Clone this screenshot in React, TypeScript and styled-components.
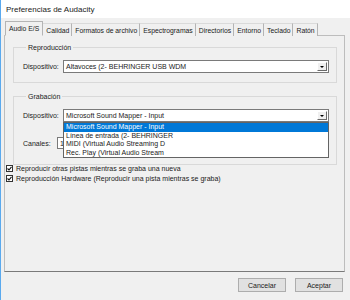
import React from "react";
import styled, { createGlobalStyle } from "styled-components";

const GlobalStyle = createGlobalStyle`
  html, body {
    margin: 0;
    padding: 0;
    background: #f0f0f0;
  }
  body {
    font-family: "Liberation Sans", Arial, sans-serif;
    font-size: 7px;
    color: #1a1a1a;
  }
`;

const Window = styled.div`
  width: 350px;
  height: 300px;
  display: flex;
  flex-direction: column;
  border-left: 1px solid #5aa9ee;
  box-sizing: border-box;
  background: #f0f0f0;
  overflow: hidden;
`;

const TitleBar = styled.div`
  height: 18px;
  background: #ffffff;
  display: flex;
  align-items: center;
  padding-left: 5px;
  font-size: 8px;
  color: #222;
`;

const Body = styled.div`
  flex: 1;
  display: flex;
  flex-direction: column;
  padding: 3px 5px 0 3px;
`;

const TabStrip = styled.div`
  display: flex;
  align-items: flex-end;
  height: 15px;
  padding-left: 1px;
  margin-bottom: -1px;
  position: relative;
  z-index: 1;
`;

const Tab = styled.div<{ $active?: boolean }>`
  height: ${(p) => (p.$active ? 15 : 13)}px;
  display: flex;
  align-items: center;
  padding: 0 ${(p) => (p.$active ? 3 : 2)}px 0 3px;
  font-size: 6.8px;
  border: 1px solid #b4b4b4;
  border-top-color: ${(p) => (p.$active ? "#b4b4b4" : "#dadada")};
  border-bottom: ${(p) => (p.$active ? "1px solid #f0f0f0" : "none")};
  border-left: ${(p) => (p.$active ? "1px solid #b4b4b4" : "none")};
  background: #f0f0f0;
  white-space: nowrap;
  box-sizing: border-box;
`;

const Panel = styled.div`
  height: 237px;
  border: 1px solid #bdbdbd;
  border-bottom-color: #7a7a7a;
  display: flex;
  flex-direction: column;
  gap: 10px;
  padding: 8px 7px 0 8px;
  box-sizing: border-box;
`;

const Group = styled.fieldset<{ $bottom: number }>`
  margin: 0;
  padding: 9px 7px ${(p) => p.$bottom}px 9px;
  border: 1px solid #d9d9d9;
  display: flex;
  flex-direction: column;
  gap: 15px;
  position: relative;
`;

const Legend = styled.legend`
  padding: 0 2px;
  margin-left: 3px;
  font-size: 7px;
`;

const Row = styled.div`
  display: flex;
  align-items: center;
`;

const Label = styled.span<{ $w: number }>`
  width: ${(p) => p.$w}px;
  flex-shrink: 0;
`;

const Select = styled.div`
  flex: 1;
  height: 13px;
  border: 1px solid #7a7a7a;
  background: #fff;
  display: flex;
  align-items: center;
  padding-left: 2px;
  box-sizing: border-box;
  position: relative;
`;

const SelectText = styled.span`
  flex: 1;
  white-space: nowrap;
`;

const ArrowButton = styled.span`
  width: 10px;
  height: 9px;
  margin-right: 1px;
  box-sizing: border-box;
  background: #f0f0f0;
  border: 1px solid;
  border-color: #ffffff #6a6a6a #6a6a6a #ffffff;
  display: flex;
  align-items: center;
  justify-content: center;
`;

const Triangle = styled.span`
  width: 0;
  height: 0;
  border-left: 2px solid transparent;
  border-right: 2px solid transparent;
  border-top: 2px solid #000;
`;

const DropList = styled.div`
  position: absolute;
  left: -1px;
  right: -1px;
  top: 12px;
  background: #fff;
  border: 1px solid #646464;
  z-index: 2;
  display: flex;
  flex-direction: column;
`;

const DropItem = styled.div<{ $selected?: boolean }>`
  height: 8.5px;
  line-height: 8.5px;
  padding-left: 2px;
  white-space: nowrap;
  background: ${(p) => (p.$selected ? "#0078d7" : "#fff")};
  color: ${(p) => (p.$selected ? "#fff" : "#1a1a1a")};
`;

const SpinBox = styled.div`
  width: 22px;
  height: 12px;
  border: 1px solid #7a7a7a;
  background: #fff;
  box-sizing: border-box;
  padding-left: 2px;
  display: flex;
  align-items: center;
`;

const CheckRow = styled.label`
  display: flex;
  align-items: center;
  gap: 3px;
  margin-left: -7px;
  height: 9px;
`;

const CheckBox = styled.span`
  width: 7px;
  height: 7px;
  border: 1px solid #333;
  background: #fff;
  box-sizing: border-box;
  display: flex;
  align-items: center;
  justify-content: center;
`;

const Checks = styled.div`
  display: flex;
  flex-direction: column;
  gap: 1px;
  margin-top: -11px;
`;

const Footer = styled.div`
  flex: 1;
  display: flex;
  justify-content: flex-end;
  align-items: center;
  gap: 9px;
  padding-right: 2px;
  padding-bottom: 2px;
`;

const Button = styled.button`
  width: 48px;
  height: 14px;
  padding: 0;
  border: 1px solid #adadad;
  background: #e1e1e1;
  font-family: "Liberation Sans", Arial, sans-serif;
  font-size: 7px;
  color: #1a1a1a;
`;

const tabs = [
  "Audio E/S",
  "Calidad",
  "Formatos de archivo",
  "Espectrogramas",
  "Directorios",
  "Entorno",
  "Teclado",
  "Ratón",
];

const devices = [
  "Microsoft Sound Mapper - Input",
  "Línea de entrada (2- BEHRINGER",
  "MIDI (Virtual Audio Streaming D",
  "Rec. Play (Virtual Audio Stream",
];

const Check = () => (
  <CheckBox>
    <svg width="5" height="5" viewBox="0 0 5 5">
      <path d="M0.5 2.5 L2 4 L4.5 0.8" fill="none" stroke="#111" strokeWidth="1.1" />
    </svg>
  </CheckBox>
);

const Arrow = () => (
  <ArrowButton>
    <Triangle />
  </ArrowButton>
);

export default function App() {
  return (
    <>
      <GlobalStyle />
      <Window>
        <TitleBar>Preferencias de Audacity</TitleBar>
        <Body>
          <TabStrip>
            {tabs.map((t, i) => (
              <Tab key={t} $active={i === 0}>
                {t}
              </Tab>
            ))}
          </TabStrip>
          <Panel>
            <Group $bottom={9}>
              <Legend>Reproducción</Legend>
              <Row>
                <Label $w={40}>Dispositivo:</Label>
                <Select>
                  <SelectText>Altavoces (2- BEHRINGER USB WDM</SelectText>
                  <Arrow />
                </Select>
              </Row>
            </Group>
            <Group $bottom={15}>
              <Legend>Grabación</Legend>
              <Row>
                <Label $w={40}>Dispositivo:</Label>
                <Select>
                  <SelectText>Microsoft Sound Mapper - Input</SelectText>
                  <Arrow />
                  <DropList>
                    {devices.map((d, i) => (
                      <DropItem key={d} $selected={i === 0}>
                        {d}
                      </DropItem>
                    ))}
                  </DropList>
                </Select>
              </Row>
              <Row>
                <Label $w={34}>Canales:</Label>
                <SpinBox>1</SpinBox>
              </Row>
            </Group>
            <Checks>
              <CheckRow>
                <Check />
                Reproducir otras pistas mientras se graba una nueva
              </CheckRow>
              <CheckRow>
                <Check />
                Reproducción Hardware (Reproducir una pista mientras se graba)
              </CheckRow>
            </Checks>
          </Panel>
          <Footer>
            <Button>Cancelar</Button>
            <Button>Aceptar</Button>
          </Footer>
        </Body>
      </Window>
    </>
  );
}
